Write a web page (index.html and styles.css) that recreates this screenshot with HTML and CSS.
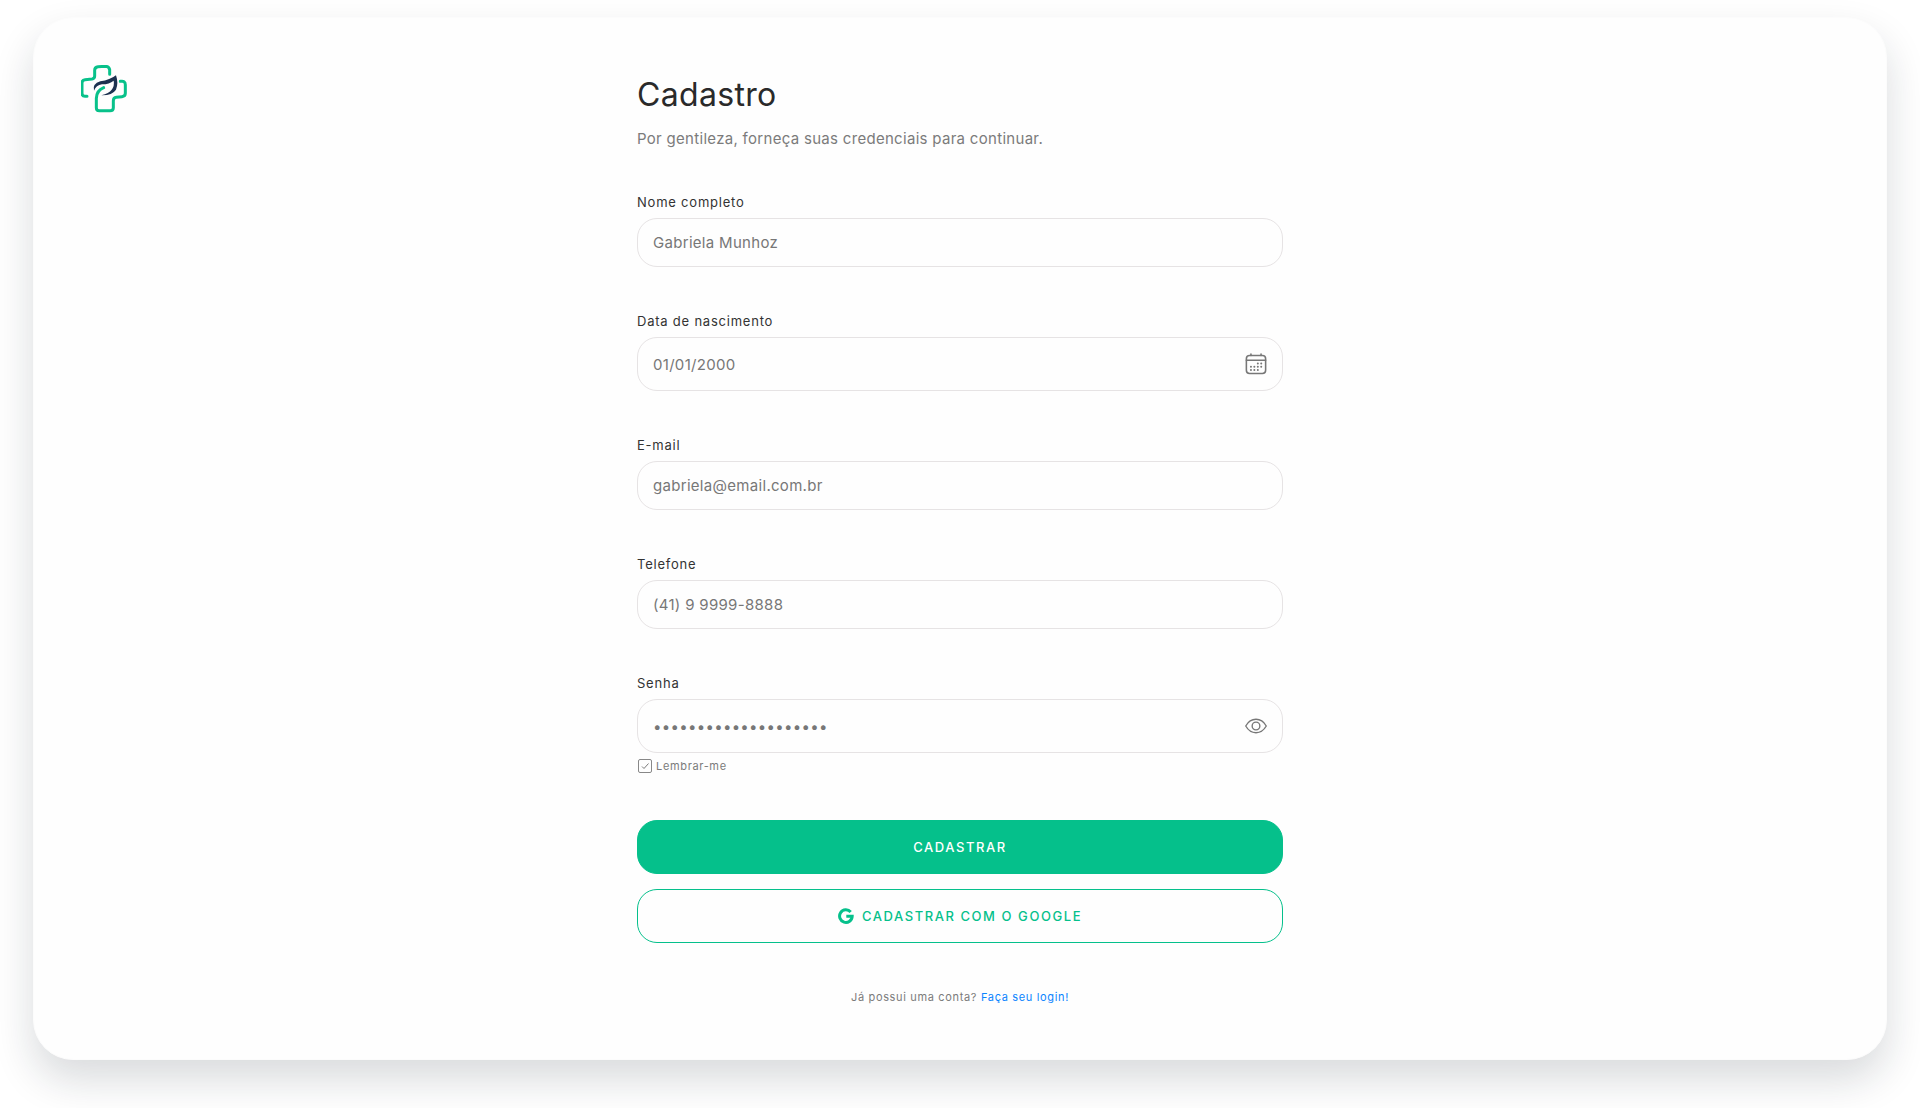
FILE: index.html
```html
<!DOCTYPE html>
<html lang="pt-BR">
<head>
<meta charset="utf-8">
<meta name="viewport" content="width=device-width, initial-scale=1">
<title>Cadastro</title>
<link rel="stylesheet" href="styles.css">
</head>
<body>
<div class="card">
  <header class="brand">
    <svg class="logo" viewBox="33 30 144 144" aria-hidden="true">
      <g fill="none" stroke="#08c18a" stroke-width="9" stroke-linecap="round" stroke-linejoin="round">
        <path d="M51 124H45Q36 124 36 115V84Q36 75 45 74L66 72Q74 71 74 63V46Q74 36 84 35L106 34Q117 34 119 44V58"/>
        <path d="M151 79Q166 76 166 89V115Q166 124 156 125L139 127Q130 128 130 137V158Q130 167 120 167H88Q79 167 79 158V130Q80 106 101 98"/>
      </g>
      <path d="M72 107Q66 87 91 79Q120 75 138 61Q146 84 138 104Q126 122 94 121Q117 115 125 104Q134 92 131 77Q118 88 96 88Q78 91 72 107Z" fill="#1d3150"/>
    </svg>
  </header>
  <main class="signup">
    <h1 class="title">Cadastro</h1>
    <p class="subtitle">Por gentileza, forneça suas credenciais para continuar.</p>
    <form class="form">
      <div class="field">
        <label class="label" for="name">Nome completo</label>
        <div class="control"><input class="input" id="name" type="text" placeholder="Gabriela Munhoz"></div>
      </div>
      <div class="field">
        <label class="label" for="birth">Data de nascimento</label>
        <div class="control control-icon">
          <input class="input" id="birth" type="text" placeholder="01/01/2000">
          <button class="icon-button" type="button" aria-label="Abrir calendário">
            <svg class="icon" viewBox="0 0 24 24" fill="none" stroke="currentColor" stroke-width="1.7" stroke-linecap="round">
              <rect x="1.500" y="2.800" width="21" height="19.500" rx="3.500"/><path d="M1.500 8h21M6.500 1.200v1.600M17.500 1.200v1.600"/>
              <path d="M14 11.500h.01M17.700 11.500h.01M6.500 15h.01M10.200 15h.01M14 15h.01M17.700 15h.01M6.500 18.500h.01M10.200 18.500h.01M14 18.500h.01" stroke-width="2.200"/>
            </svg>
          </button>
        </div>
      </div>
      <div class="field">
        <label class="label" for="email">E-mail</label>
        <div class="control"><input class="input" id="email" type="email" placeholder="gabriela@email.com.br"></div>
      </div>
      <div class="field">
        <label class="label" for="phone">Telefone</label>
        <div class="control"><input class="input" id="phone" type="tel" placeholder="(41) 9 9999-8888"></div>
      </div>
      <div class="field">
        <label class="label" for="password">Senha</label>
        <div class="control control-icon">
          <input class="input" id="password" type="password" placeholder="••••••••••••••••••••">
          <button class="icon-button" type="button" aria-label="Mostrar senha">
            <svg class="icon" viewBox="0 0 24 24" fill="none" stroke="currentColor" stroke-width="1.500" stroke-linejoin="round">
              <path d="M.8 12C3.500 7.300 7.300 4.700 12 4.700s8.500 2.600 11.200 7.300C20.500 16.700 16.700 19.300 12 19.300S3.500 16.700.8 12Z"/><circle cx="12" cy="12" r="4.200"/>
            </svg>
          </button>
        </div>
        <label class="remember">
          <input class="checkbox" type="checkbox" checked>
          <svg class="check" viewBox="0 0 14 14" fill="none" stroke="currentColor" aria-hidden="true"><path d="M4 7.500l2 2L10.500 4.500"/></svg>
          Lembrar-me
        </label>
      </div>
      <div class="actions">
        <button class="button button-primary" type="submit">CADASTRAR</button>
        <button class="button button-outline" type="button">
          <svg class="google" viewBox="0 0 16 16" fill="none" stroke="currentColor" stroke-width="3" aria-hidden="true"><path d="M12.700 4A6.300 6.300 0 1 0 14.200 8.200H8.300"/></svg>
          CADASTRAR COM O GOOGLE
        </button>
      </div>
    </form>
    <p class="login">Já possui uma conta? <a class="link" href="#">Faça seu login!</a></p>
  </main>
</div>
</body>
</html>
```
FILE: styles.css
```css
*, *::before, *::after { box-sizing: border-box; }

body {
  margin: 0;
  padding: 17px 33px 48px;
  background: #fff;
  color: #7b7b7b;
  font-family: Inter, "Liberation Sans", sans-serif;
}

.card {
  display: grid;
  grid-template-columns: 1fr minmax(0, 646px) 1fr;
  padding: 47px 47px 54px;
  border: 1px solid #fcfcfc;
  border-radius: 40px;
  background: #fefefe;
  box-shadow: 0 20px 40px rgba(20, 30, 45, .16);
}

.logo { display: block; width: 48px; height: 48px; }

.signup { padding-top: 10px; }

.title {
  margin: 0;
  color: #2a2a2a;
  font-size: 32px;
  font-weight: 400;
  line-height: 40px;
  letter-spacing: 0.01em;
}

.subtitle {
  margin: 12px 0 43px;
  font-size: 15px;
  line-height: 24px;
  letter-spacing: 0.02em;
}

.form { display: grid; gap: 46px; }

.label {
  display: block;
  margin-bottom: 8px;
  color: #333;
  font-size: 13px;
  line-height: 16px;
  letter-spacing: 0.06em;
}

.control {
  display: flex;
  align-items: center;
  height: 49px;
  padding: 0 15px;
  border: 1px solid #e6e3e4;
  border-radius: 20px;
}

.control-icon { height: 54px; }

.input {
  flex: 1;
  min-width: 0;
  padding: 0;
  border: 0;
  outline: 0;
  background: transparent;
  color: #777;
  font: inherit;
  font-size: 15px;
  letter-spacing: 0.02em;
}

.input::placeholder { color: #777; opacity: 1; }

.icon-button {
  padding: 0;
  border: 0;
  background: none;
  color: #777;
}

.icon { display: block; width: 22px; height: 22px; }

.remember {
  display: grid;
  grid-template-columns: 14px auto;
  justify-content: start;
  align-items: center;
  gap: 4px;
  margin: 5px 0 0 1px;
  font-size: 11px;
  line-height: 16px;
  letter-spacing: 0.06em;
}

.checkbox,
.check {
  grid-area: 1 / 1;
  width: 14px;
  height: 14px;
  margin: 0;
}

.checkbox {
  appearance: none;
  border: 1px solid #888;
  border-radius: 2px;
}

.check { pointer-events: none; }

.actions { display: grid; gap: 15px; }

.button {
  display: flex;
  justify-content: center;
  align-items: center;
  gap: 8px;
  height: 54px;
  border: 1px solid #05c08b;
  border-radius: 20px;
  font: inherit;
  font-size: 13px;
  font-weight: 500;
  letter-spacing: 0.12em;
}

.button-primary { background: #05c08b; color: #fff; }

.button-outline { background: transparent; color: #05c08b; }

.google { width: 16px; height: 16px; }

.login {
  margin: 46px 0 0;
  font-size: 11px;
  line-height: 16px;
  letter-spacing: 0.06em;
  text-align: center;
}

.link { color: #0a84ff; text-decoration: none; }
```
